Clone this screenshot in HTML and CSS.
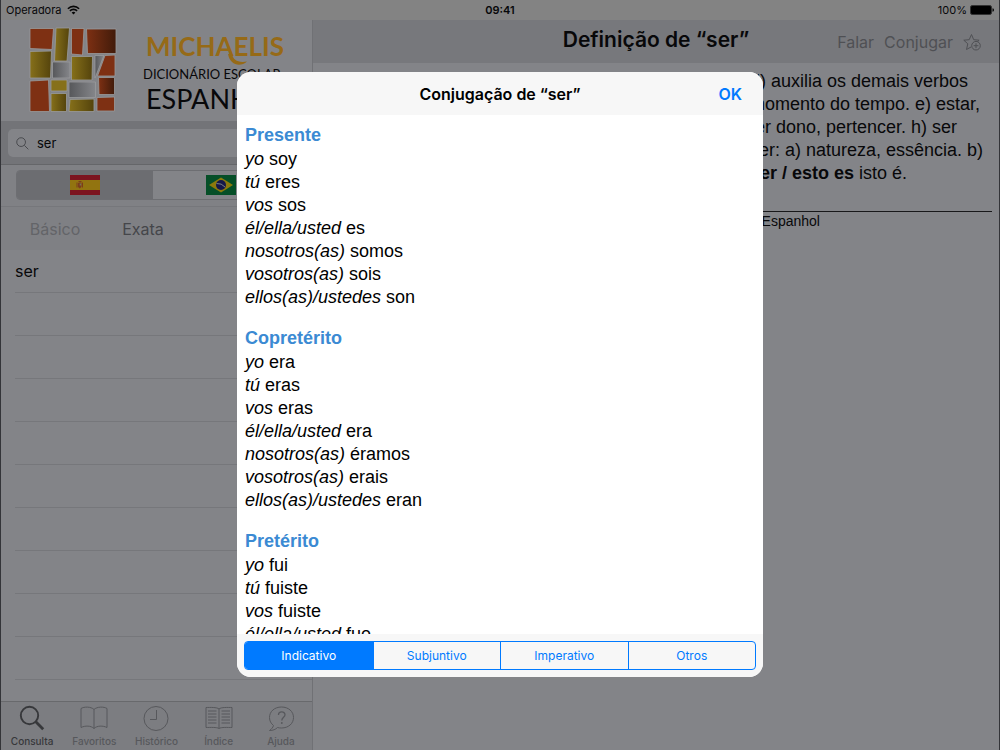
FILE: index.html
```html
<!DOCTYPE html>
<html lang="pt-BR">
<head>
<meta charset="utf-8">
<meta name="viewport" content="width=device-width, initial-scale=1">
<title>Michaelis Dicionário Escolar Espanhol</title>
<link rel="stylesheet" href="styles.css">
</head>
<body>
<div class="screen">
  <header class="status">
    <span class="carrier">Operadora
      <svg class="wifi" viewBox="0 0 13 10" aria-hidden="true"><g fill="none" stroke="#060606" stroke-width="1.6"><path d="M.9 3.7a8 8 0 0 1 11.2 0"/><path d="M2.9 5.9a5.1 5.1 0 0 1 7.2 0"/></g><path d="M4.6 7.6a2.8 2.8 0 0 1 3.8 0L6.5 9.6z" fill="#060606"/></svg>
    </span>
    <time class="clock">09:41</time>
    <span class="power">100%
      <svg class="battery" viewBox="0 0 24 10" aria-hidden="true"><rect x=".5" y=".5" width="21" height="9" rx="1.8" fill="#000" stroke="#333"/><path d="M22.5 3.2q1.5.3 1.5 1.8t-1.5 1.8z" fill="#000"/></svg>
    </span>
  </header>

  <div class="split">
    <aside class="sidebar">
      <div class="brand">
        <svg class="mosaic" viewBox="0 0 88 86" aria-hidden="true">
          <defs>
            <linearGradient id="olive"><stop offset="0" stop-color="#86701a"/><stop offset="1" stop-color="#54430c"/></linearGradient>
            <linearGradient id="grey"><stop offset="0" stop-color="#56575a"/><stop offset="1" stop-color="#85868a"/></linearGradient>
            <linearGradient id="rust"><stop offset="0" stop-color="#7e3013"/><stop offset="1" stop-color="#411b0a"/></linearGradient>
          </defs>
          <g stroke="#999a9c" stroke-width=".8">
            <path d="M1 1.500H24.500L23 22.500 1 21.500z" fill="#7e3013"/>
            <path d="M27 1 40.500 1 38 34H25.500z" fill="url(#olive)"/>
            <path d="M42.500 1.500H55L53.500 28 42.500 27z" fill="#7e3013"/>
            <path d="M57.500 2H87V26.500H58.500z" fill="url(#rust)"/>
            <path d="M1 24.500 22.500 24 21.500 51H1z" fill="url(#olive)"/>
            <path d="M23.500 35H41V51H23.500z" fill="url(#grey)"/>
            <path d="M42.500 29.500H63.500L63 53H42.500z" fill="url(#olive)"/>
            <path d="M66 28.500H75L66 51z" fill="url(#grey)"/>
            <path d="M76 28.500 86 28V49H68.500z" fill="#7e3013"/>
            <path d="M1 54 19.500 53 20.500 84.500H1z" fill="#7e3013"/>
            <path d="M22 53H38V64H22z" fill="#86701a"/>
            <path d="M40 55H66.500V70.500H40z" fill="url(#grey)"/>
            <path d="M69.500 50.500H85.500V67.500H70z" fill="url(#rust)"/>
            <path d="M22 66.500H37.500V84.500H22z" fill="url(#olive)"/>
            <path d="M41 72.500 65 72V84.500H40z" fill="url(#olive)"/>
            <path d="M68 70.500 85.500 70V84H68z" fill="#7e3013"/>
          </g>
        </svg>
        <div class="wordmark">
          <span class="name">MICHAELIS</span>
          <svg class="swash" viewBox="0 0 20 12" aria-hidden="true"><path d="M0 0h4c1 6 6 9 15 7.500-7 6-17 3.500-19-7.500z" fill="#966a17"/></svg>
          <span class="series">DICIONÁRIO ESCOLAR</span>
          <span class="language">ESPANHOL</span>
        </div>
      </div>

      <div class="searchbar">
        <label class="field">
          <svg class="lens" viewBox="0 0 14 14" aria-hidden="true"><g fill="none" stroke="#444549" stroke-width="1"><circle cx="5.500" cy="5.500" r="4.700"/><path d="m9 9 4.300 4.300"/></g></svg>
          <input type="text" value="ser" aria-label="Buscar">
        </label>
      </div>

      <div class="languages">
        <div class="flags">
          <button class="flag is-on" type="button" aria-label="Espanhol">
            <svg viewBox="0 0 30 20" aria-hidden="true"><path fill="#7c1420" d="M0 0h30v20H0z"/><path fill="#927410" d="M0 5h30v10H0z"/><path fill="#7c3c1c" d="M6.500 7.500h1v5h-1zm5.500 0h1v5h-1zM8.500 6h3v1.500h-3zM8 8h3.500v4L9.700 13.500 8 12z"/><path fill="#77705a" d="M9.700 8.500h1.500v2H9.700z"/></svg>
          </button>
          <button class="flag" type="button" aria-label="Português">
            <svg viewBox="0 0 30 20" aria-hidden="true"><path fill="#064f28" d="M0 0h30v20H0z"/><path fill="#8b7a0c" d="M15 2.500 27 10 15 17.500 3 10z"/><circle cx="15" cy="10" r="5" fill="#14184a"/><path d="M10.500 8.500q5-.5 8.500 3.500" fill="none" stroke="#777f85"/></svg>
          </button>
        </div>
      </div>

      <div class="modes">
        <button class="mode is-off" type="button">Básico</button>
        <button class="mode" type="button">Exata</button>
      </div>

      <ul class="results">
        <li>ser</li><li></li><li></li><li></li><li></li><li></li><li></li><li></li><li></li><li></li>
      </ul>

      <nav class="tabs">
        <button class="tab is-on" type="button">
          <svg viewBox="0 0 28 26" aria-hidden="true"><g fill="none" stroke="currentColor"><circle cx="11.500" cy="10.500" r="8.700" stroke-width="1.900"/><path d="m17.800 16.800 7.400 7.500" stroke-width="2.800"/></g></svg>
          Consulta</button>
        <button class="tab" type="button">
          <svg viewBox="0 0 28 26" aria-hidden="true"><path d="M14 4.500C11 1.500 4 1.500 1 3.500V22.500c4-2 10-2 13 1 3-3 9-3 13-1V3.500C24 1.500 17 1.500 14 4.500zV23.500" fill="none" stroke="currentColor"/></svg>
          Favoritos</button>
        <button class="tab" type="button">
          <svg viewBox="0 0 28 26" aria-hidden="true"><g fill="none" stroke="currentColor"><circle cx="14" cy="13.500" r="12"/><path d="M14.500 5v9.500H8"/></g></svg>
          Histórico</button>
        <button class="tab" type="button">
          <svg viewBox="0 0 28 26" aria-hidden="true"><g fill="none" stroke="currentColor"><path d="M14 4C12 2 5 2.500 1 2.500V22.500c4 0 11-.5 13 1 2-1.500 9-1 13-1V2.500C23 2.500 16 2 14 4zV23.500"/><path d="M3 6h8.500M3 9h8.500M3 12h8.500M3 15h8.500M3 18h8.500M16.500 6H25M16.500 9H25M16.500 12H25M16.500 15H25M16.500 18H25"/></g></svg>
          Índice</button>
        <button class="tab" type="button">
          <svg viewBox="0 0 28 26" aria-hidden="true"><g fill="none" stroke="currentColor"><path d="M14.500 2C7.500 2 2.500 6.500 2.500 12.500c0 3.500 1.500 6 4 8-.5 2-2 3.500-4 5 3.500 0 6-1 8-3 1.300.4 2.700.5 4 .5 7 0 12-4.500 12-10.500S21.500 2 14.500 2z"/><path d="M11.500 10c0-4 6.500-4 6.500-.3 0 2.600-3.200 2.500-3.200 5.800" stroke-width="1.300"/></g><circle cx="14.800" cy="18" r=".9" fill="currentColor"/></svg>
          Ajuda</button>
      </nav>
    </aside>

    <main class="detail">
      <header class="navbar">
        <h1>Definição de “ser”</h1>
        <div class="actions">
          <button type="button">Falar</button>
          <button type="button">Conjugar</button>
          <button type="button" aria-label="Adicionar aos favoritos">
            <svg class="star" viewBox="0 0 18 18" aria-hidden="true"><g fill="none" stroke="currentColor"><path d="M8 14 3.500 16.500 4.800 10.800.8 7.200l5.400-.5L8.500 1.500l2.200 5.200 5.400.5-1.800 1.600"/><circle cx="13" cy="12.700" r="4.300"/><path d="M13 10.300v4.800M10.600 12.700h4.800"/></g></svg>
          </button>
        </div>
      </header>
      <article class="definition">
        <p>d) auxilia os demais verbos<br>momento do tempo. e) estar,<br>&nbsp;er dono, pertencer. h) ser<br>ser: a) natureza, essência. b)<br><b>ser / esto es</b> isto é.</p>
        <footer>r Espanhol</footer>
      </article>
    </main>
  </div>
</div>

<div class="overlay">
  <section class="dialog" role="dialog" aria-labelledby="dialog-title">
    <header class="dialog-head">
      <h2 id="dialog-title">Conjugação de “ser”</h2>
      <button class="ok" type="button">OK</button>
    </header>
    <div class="verbs">
      <section>
        <h3>Presente</h3>
        <p><i>yo</i> soy</p><p><i>tú</i> eres</p><p><i>vos</i> sos</p><p><i>él/ella/usted</i> es</p><p><i>nosotros(as)</i> somos</p><p><i>vosotros(as)</i> sois</p><p><i>ellos(as)/ustedes</i> son</p>
      </section>
      <section>
        <h3>Copretérito</h3>
        <p><i>yo</i> era</p><p><i>tú</i> eras</p><p><i>vos</i> eras</p><p><i>él/ella/usted</i> era</p><p><i>nosotros(as)</i> éramos</p><p><i>vosotros(as)</i> erais</p><p><i>ellos(as)/ustedes</i> eran</p>
      </section>
      <section>
        <h3>Pretérito</h3>
        <p><i>yo</i> fui</p><p><i>tú</i> fuiste</p><p><i>vos</i> fuiste</p><p><i>él/ella/usted</i> fue</p>
      </section>
    </div>
    <footer class="dialog-foot">
      <div class="moods">
        <button class="is-on" type="button">Indicativo</button>
        <button type="button">Subjuntivo</button>
        <button type="button">Imperativo</button>
        <button type="button">Otros</button>
      </div>
    </footer>
  </section>
</div>
</body>
</html>
```

FILE: styles.css
```css
* { box-sizing: border-box; }

body {
  margin: 0;
  background: #838488;
  color: #08080a;
  font-family: Inter, "Liberation Sans", sans-serif;
}

h1, h2, h3, p, ul { margin: 0; padding: 0; }

button {
  margin: 0;
  padding: 0;
  border: 0;
  background: none;
  color: inherit;
  font: inherit;
}

svg { display: block; }

/* Screen frame */
.screen {
  display: flex;
  flex-direction: column;
  height: 100vh;
  overflow: hidden;
  border: solid #333438;
  border-width: 0 1px;
}

.status {
  display: grid;
  grid-template-columns: 1fr auto 1fr;
  align-items: center;
  flex: none;
  height: 20px;
  padding: 0 5px;
  background: #838383;
  font-size: 11px;
}

.carrier, .power { display: flex; align-items: center; gap: 5px; }
.power { justify-content: flex-end; gap: 3px; }
.clock { font-weight: 600; }
.wifi { width: 13px; height: 10px; }
.battery { width: 24px; height: 10px; }

.split { display: flex; flex: 1; min-height: 0; }

/* Sidebar */
.sidebar {
  display: flex;
  flex-direction: column;
  flex: none;
  width: 312px;
  border-right: 1px solid #707175;
}

.brand {
  display: flex;
  flex: none;
  gap: 26px;
  height: 101px;
  padding: 7px 0 0 28px;
}

.mosaic { flex: none; width: 88px; height: 86px; }

.wordmark {
  position: relative;
  display: flex;
  flex-direction: column;
  white-space: nowrap;
}

.name {
  padding-left: 3px;
  color: #966a17;
  font-family: Lato, "Liberation Sans", sans-serif;
  font-size: 26px;
  font-weight: 700;
  line-height: 38px;
}

.swash {
  position: absolute;
  top: 27px;
  left: 85px;
  width: 20px;
  height: 12px;
}

.series, .language { font-family: Lato, "Open Sans", sans-serif; }
.series { font-size: 13px; line-height: 18px; }
.language { padding-left: 3px; font-size: 27px; line-height: 32px; }

.searchbar {
  flex: none;
  padding: 8px 8px 7px 7px;
  border-bottom: 1px solid #656669;
  background: #737478;
}

.field {
  display: flex;
  align-items: center;
  gap: 8px;
  height: 28px;
  padding: 0 8px;
  border-radius: 5px;
  background: #838488;
}

.lens { flex: none; width: 13px; height: 13px; }

.field input {
  flex: 1;
  min-width: 0;
  padding: 0;
  border: 0;
  outline: 0;
  background: none;
  color: #08080a;
  font: 13px Inter, sans-serif;
}

.languages {
  flex: none;
  padding: 5px 15px 6px;
  border-bottom: 1px solid #76777b;
  background: #808185;
}

.flags {
  display: grid;
  grid-template-columns: 1fr 1fr;
  width: 274px;
  overflow: hidden;
  border: 1px solid #6d6e72;
  border-radius: 4px;
}

.flag {
  display: grid;
  place-items: center;
  height: 28px;
  background: #838488;
}

.flag.is-on { background: #6c6d71; }
.flag svg { width: 30px; height: 20px; }

.modes {
  display: grid;
  grid-template-columns: repeat(3, 88px);
  flex: none;
  height: 43px;
  padding-left: 10px;
  background: #7f8084;
  color: #45464a;
  font-size: 16px;
}

.mode.is-off { color: #636468; }

.results {
  flex: 1;
  min-height: 0;
  overflow: hidden;
  padding-left: 14px;
  list-style: none;
  font-size: 16px;
}

.results li {
  height: 43px;
  border-bottom: 1px solid #76777b;
  line-height: 42px;
}

.tabs {
  display: grid;
  grid-template-columns: repeat(5, 1fr);
  flex: none;
  height: 49px;
  border-top: 1px solid #68696c;
  background: #7c7d81;
  color: #57585c;
  font-size: 10px;
  font-weight: 500;
}

.tab {
  display: flex;
  flex-direction: column;
  align-items: center;
  gap: 3px;
  padding-top: 3px;
  line-height: 14px;
}

.tab.is-on { color: #37383b; }
.tab svg { width: 28px; height: 26px; }

/* Definition pane */
.detail { flex: 1; min-width: 0; }

.navbar {
  display: grid;
  grid-template-columns: 1fr auto 1fr;
  align-items: center;
  height: 43px;
  background: #77787c;
}

.navbar h1 {
  grid-column: 2;
  padding-bottom: 3px;
  font-size: 21px;
  font-weight: 600;
  line-height: 40px;
}

.actions {
  display: flex;
  align-items: center;
  justify-content: flex-end;
  gap: 10px;
  padding-right: 18px;
  color: #4f5054;
  font-size: 16px;
}

.star { width: 18px; height: 18px; }

.definition {
  padding: 7px 7px 0;
  font-family: "Liberation Sans", Arial, sans-serif;
}

.definition p {
  padding-left: 430px;
  font-size: 18px;
  line-height: 23px;
  white-space: nowrap;
}

.definition footer {
  margin-top: 26px;
  padding-left: 433px;
  border-top: 1px solid #18181a;
  font-size: 14px;
  line-height: 18px;
}

/* Conjugation dialog */
.overlay {
  position: fixed;
  inset: 0;
  display: grid;
  place-items: center;
  padding-bottom: 1px;
}

.dialog {
  display: flex;
  flex-direction: column;
  width: min(526px, 100vw);
  height: calc(100vh - 145px);
  overflow: hidden;
  border-radius: 14px;
  background: #fff;
}

.dialog-head {
  display: grid;
  grid-template-columns: 1fr auto 1fr;
  align-items: center;
  flex: none;
  height: 43px;
  padding: 0 21px;
  background: #f7f7f7;
  color: #000;
}

.dialog-head h2 { grid-column: 2; font-size: 16px; font-weight: 600; }

.ok {
  justify-self: end;
  color: #007aff;
  font-size: 16px;
  font-weight: 600;
}

.verbs {
  flex: 1;
  min-height: 0;
  overflow: hidden;
  padding: 7px 8px 0;
  color: #000;
  font-family: "Liberation Sans", Arial, sans-serif;
  font-size: 18px;
  line-height: 23px;
}

.verbs section { padding-bottom: 16px; }

.verbs h3 {
  color: #3b8ad3;
  font-size: 18px;
  font-weight: 700;
  line-height: 26px;
}

.dialog-foot { flex: none; padding: 7px; background: #f7f7f7; }

.moods {
  display: grid;
  grid-template-columns: repeat(4, 1fr);
  overflow: hidden;
  border: 1px solid #007aff;
  border-radius: 4px;
  color: #007aff;
  font-size: 12px;
}

.moods button { height: 27px; }
.moods button + button { border-left: 1px solid #007aff; }
.moods .is-on { background: #007aff; color: #fff; }
```
